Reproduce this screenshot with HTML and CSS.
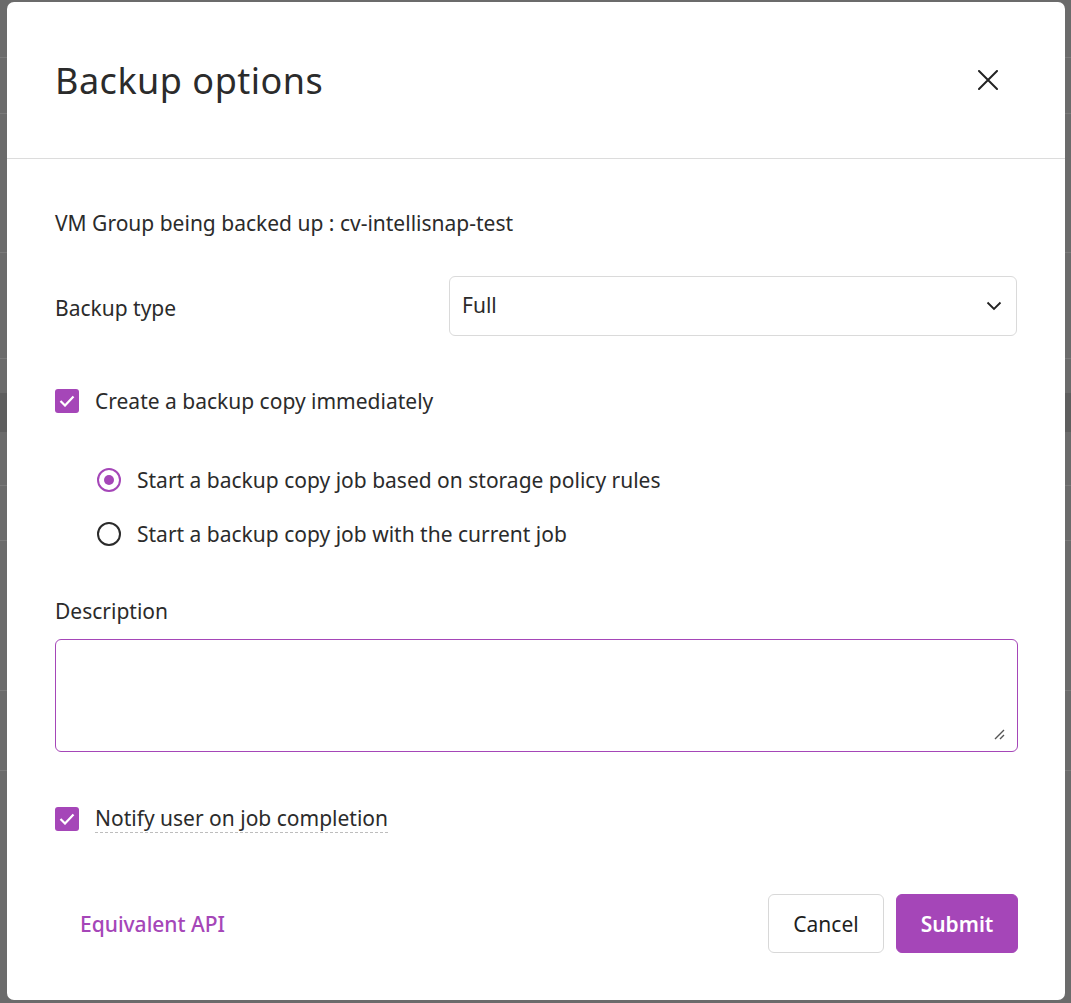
FILE: index.html
```html
<!DOCTYPE html>
<html lang="en">
<head>
<meta charset="utf-8">
<title>Backup options</title>
<link rel="stylesheet" href="styles.css">
</head>
<body>
<div class="backdrop">
  <div class="modal" role="dialog" aria-labelledby="dlg-title">
    <header class="modal-header">
      <h1 id="dlg-title" class="modal-title">Backup options</h1>
      <button class="close-btn" aria-label="Close">
        <svg width="20" height="20" viewBox="0 0 20 20"><path d="M1 1 L19 19 M19 1 L1 19" stroke="#222" stroke-width="2" fill="none" stroke-linecap="round"/></svg>
      </button>
    </header>

    <div class="modal-body">
      <p class="group-line">VM Group being backed up : cv-intellisnap-test</p>

      <div class="field-row">
        <label class="field-label">Backup type</label>
        <div class="select">
          <span>Full</span>
          <svg class="chevron" width="16" height="10" viewBox="0 0 16 10"><path d="M1.5 1.5 L8 8 L14.5 1.5" stroke="#222" stroke-width="1.8" fill="none"/></svg>
        </div>
      </div>

      <label class="check-row copy-row">
        <span class="checkbox"><svg width="16" height="12" viewBox="0 0 16 12"><path d="M1.5 6 L6 10.5 L14.5 1.5" stroke="#fff" stroke-width="2.2" fill="none"/></svg></span>
        <span>Create a backup copy immediately</span>
      </label>

      <div class="radio-group">
        <label class="radio-row"><span class="radio checked"></span><span>Start a backup copy job based on storage policy rules</span></label>
        <label class="radio-row"><span class="radio"></span><span>Start a backup copy job with the current job</span></label>
      </div>

      <label class="desc-label">Description</label>
      <div class="textarea">
        <svg class="grip" width="12" height="12" viewBox="0 0 12 12"><path d="M2 11 L11 2 M7 11 L11 7" stroke="#555" stroke-width="1.4"/></svg>
      </div>

      <label class="check-row notify-row">
        <span class="checkbox"><svg width="16" height="12" viewBox="0 0 16 12"><path d="M1.5 6 L6 10.5 L14.5 1.5" stroke="#fff" stroke-width="2.2" fill="none"/></svg></span>
        <span class="dashed">Notify user on job completion</span>
      </label>
    </div>

    <footer class="modal-footer">
      <a class="api-link">Equivalent API</a>
      <div class="actions">
        <button class="btn btn-outline">Cancel</button>
        <button class="btn btn-primary">Submit</button>
      </div>
    </footer>
  </div>
</div>
</body>
</html>
```

FILE: styles.css
```css
* { box-sizing: border-box; }

html, body {
  margin: 0;
  padding: 0;
  height: 100%;
}

body {
  font-family: "Noto Sans", "Open Sans", sans-serif;
  color: #2b2b2b;
  background: #6b6b6b;
}

.backdrop {
  width: 1071px;
  height: 1003px;
  padding: 2px 6px 0 7px;
  background:
    linear-gradient(#7a7a7a, #7a7a7a) 0 57px / 100% 1px no-repeat,
    linear-gradient(#7a7a7a, #7a7a7a) 0 113px / 100% 1px no-repeat,
    linear-gradient(#7a7a7a, #7a7a7a) 0 252px / 100% 1px no-repeat,
    linear-gradient(#7a7a7a, #7a7a7a) 0 358px / 100% 1px no-repeat,
    linear-gradient(#5e5e5e, #5e5e5e) 0 393px / 100% 39px no-repeat,
    linear-gradient(#7a7a7a, #7a7a7a) 0 485px / 100% 1px no-repeat,
    linear-gradient(#7a7a7a, #7a7a7a) 0 540px / 100% 1px no-repeat,
    linear-gradient(#7a7a7a, #7a7a7a) 0 690px / 100% 1px no-repeat,
    linear-gradient(#7a7a7a, #7a7a7a) 0 770px / 100% 1px no-repeat,
    #6b6b6b;
}

.modal {
  width: 1058px;
  height: 998px;
  background: #fff;
  border-radius: 7px;
  display: flex;
  flex-direction: column;
}

.modal-header {
  height: 157px;
  border-bottom: 1px solid #dcdcdc;
  display: flex;
  align-items: center;
  justify-content: space-between;
  padding: 0 65px 0 48px;
  flex-shrink: 0;
}

.modal-title {
  margin: 0;
  font-size: 36px;
  font-weight: 400;
  color: #2b2b2b;
  letter-spacing: 0.5px;
}

.close-btn {
  width: 24px;
  height: 24px;
  padding: 2px;
  border: 0;
  background: none;
  display: flex;
  align-items: center;
  justify-content: center;
}

.modal-body {
  padding: 50px 48px 0 48px;
  font-size: 21px;
  flex: 1;
}

.group-line {
  margin: 0;
  line-height: 28px;
}

.field-row {
  margin-top: 39px;
  display: grid;
  grid-template-columns: 394px 1fr;
  align-items: center;
}

.field-label {
  line-height: 28px;
  padding-top: 4px;
}

.select {
  height: 60px;
  border: 1px solid #dadada;
  border-radius: 6px;
  display: flex;
  align-items: center;
  justify-content: space-between;
  padding: 0 14px 0 12px;
  padding-bottom: 2px;
}

.chevron { margin-top: 2px; }

.check-row {
  display: flex;
  align-items: center;
  gap: 16px;
  line-height: 28px;
}

.copy-row { margin-top: 51px; }

.checkbox {
  width: 24px;
  height: 24px;
  border-radius: 3px;
  background: #a546b8;
  display: flex;
  align-items: center;
  justify-content: center;
  flex-shrink: 0;
}

.radio-group {
  margin-top: 51px;
  padding-left: 42px;
  display: flex;
  flex-direction: column;
  gap: 26px;
}

.radio-row {
  display: flex;
  align-items: center;
  gap: 16px;
  line-height: 28px;
}

.radio {
  width: 24px;
  height: 24px;
  border-radius: 50%;
  border: 2px solid #2b2b2b;
  flex-shrink: 0;
  position: relative;
}

.radio.checked {
  border-color: #a546b8;
}

.radio.checked::after {
  content: "";
  position: absolute;
  left: 5px;
  top: 5px;
  width: 10px;
  height: 10px;
  border-radius: 50%;
  background: #a546b8;
}

.desc-label {
  display: block;
  margin-top: 49px;
  line-height: 28px;
}

.textarea {
  margin-top: 14px;
  height: 113px;
  margin-right: -1px;
  border: 1px solid #a546b8;
  border-radius: 6px;
  position: relative;
}

.grip {
  position: absolute;
  right: 12px;
  bottom: 11px;
}

.notify-row { margin-top: 52px; }

.dashed {
  border-bottom: 1px dashed #bdbdbd;
  line-height: 28px;
  padding-bottom: 0;
}

.modal-footer {
  display: flex;
  align-items: center;
  justify-content: space-between;
  padding: 0 47px 47px 48px;
  font-size: 21px;
}

.api-link {
  color: #a546b8;
  padding-left: 25px;
  font-weight: 500;
  cursor: pointer;
}

.actions {
  display: flex;
  gap: 12px;
}

.btn {
  height: 59px;
  border-radius: 6px;
  font-family: inherit;
  font-size: 21px;
  padding: 0;
}

.btn-outline {
  background: #fff;
  border: 1px solid #d8d8d8;
  color: #1f1f1f;
  width: 116px;
}

.btn-primary {
  background: #a546b8;
  border: 1px solid #a546b8;
  color: #fff;
  font-weight: 600;
  width: 122px;
}
```
